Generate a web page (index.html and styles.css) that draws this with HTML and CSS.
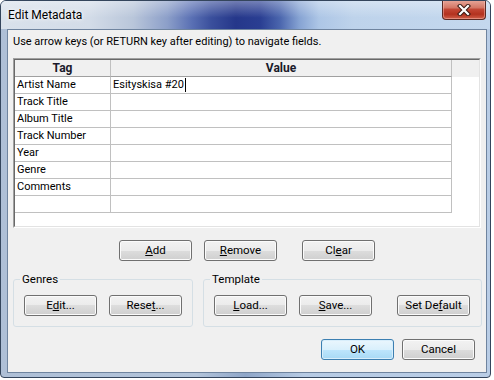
FILE: index.html
```html
<!DOCTYPE html>
<html>
<head>
<meta charset="utf-8">
<title>Edit Metadata</title>
<link rel="stylesheet" href="styles.css">
</head>
<body>
<div class="window">
  <div class="titlebar">
    <span class="title">Edit Metadata</span>
    <div class="close">
      <svg width="14" height="12" viewBox="0 0 14 12">
        <path d="M3 2 L11 10 M11 2 L3 10" stroke="#3a1a14" stroke-width="4.2" stroke-linecap="square" fill="none"/>
        <path d="M3 2 L11 10 M11 2 L3 10" stroke="#ffffff" stroke-width="2.2" stroke-linecap="square" fill="none"/>
      </svg>
    </div>
  </div>
  <div class="client">
    <p class="hint">Use arrow keys (or RETURN key after editing) to navigate fields.</p>
    <div class="listbox">
      <div class="listinner">
        <div class="hdr">
          <div class="hcell c-tag">Tag</div>
          <div class="hcell c-val">Value</div>
        </div>
        <div class="row"><div class="cell c-tag">Artist Name</div><div class="cell c-val">Esityskisa #20<span class="caret"></span></div></div>
        <div class="row"><div class="cell c-tag">Track Title</div><div class="cell c-val"></div></div>
        <div class="row"><div class="cell c-tag">Album Title</div><div class="cell c-val"></div></div>
        <div class="row"><div class="cell c-tag">Track Number</div><div class="cell c-val"></div></div>
        <div class="row"><div class="cell c-tag">Year</div><div class="cell c-val"></div></div>
        <div class="row"><div class="cell c-tag">Genre</div><div class="cell c-val"></div></div>
        <div class="row"><div class="cell c-tag">Comments</div><div class="cell c-val"></div></div>
        <div class="row"><div class="cell c-tag"></div><div class="cell c-val"></div></div>
      </div>
    </div>
    <div class="btnrow">
      <button class="btn"><u>A</u>dd</button>
      <button class="btn gap12"><u>R</u>emove</button>
      <button class="btn gap25">Cl<u>e</u>ar</button>
    </div>
    <div class="groups">
      <fieldset class="group genres">
        <legend>Genres</legend>
        <div class="gbody">
          <button class="btn">E<u>d</u>it...</button>
          <button class="btn gap12">Rese<u>t</u>...</button>
        </div>
      </fieldset>
      <fieldset class="group template">
        <legend>Template</legend>
        <div class="gbody">
          <button class="btn"><u>L</u>oad...</button>
          <button class="btn gap12"><u>S</u>ave...</button>
          <button class="btn gap25">Set De<u>f</u>ault</button>
        </div>
      </fieldset>
    </div>
    <div class="okrow">
      <button class="btn ok">OK</button>
      <button class="btn gap8">Cancel</button>
    </div>
  </div>
</div>
</body>
</html>
```
FILE: styles.css
```css
html, body {
  margin: 0;
  padding: 0;
  background: #ffffff;
}

body {
  font-family: Roboto, "Open Sans", sans-serif;
  font-size: 11px;
  color: #000;
}

.window {
  width: 491px;
  height: 378px;
  box-sizing: border-box;
  border: 1px solid #34455c;
  border-radius: 6px 6px 4px 4px;
  background: linear-gradient(to right, #aebfd6 0%, #b3c4da 40%, #8fa6c8 50%, #b7cbe4 62%, #b9cde6 100%);
  display: flex;
  flex-direction: column;
  overflow: hidden;
}

.titlebar {
  height: 28px;
  flex: none;
  display: flex;
  align-items: center;
  background:
    linear-gradient(to bottom, rgba(255,255,255,0.35), rgba(255,255,255,0) 60%),
    linear-gradient(to right, #d9e1eb 0%, #d3dce8 18%, #b9c6da 27%, #8c9fc9 34%, #5a70b4 39%, #3a4f9c 43%, #25378a 48%, #2a3e92 53%, #4a65ad 57%, #86a3d3 61%, #adc6e6 65%, #bed3eb 72%, #c4d8ee 100%);
}

.title {
  padding-left: 7px;
  font-size: 12px;
  color: #000;
  text-shadow: 0 0 6px #ffffff, 0 0 3px #ffffff;
}

.close {
  margin-left: auto;
  margin-right: 4px;
  align-self: flex-start;
  margin-top: -1px;
  width: 44px;
  height: 20px;
  box-sizing: border-box;
  border: 1px solid #5a2a24;
  border-top: none;
  border-radius: 0 0 4px 4px;
  background: linear-gradient(to bottom, #e8a99c 0%, #d47766 40%, #c24634 50%, #b3321f 75%, #d0604a 100%);
  box-shadow: inset 0 0 0 1px rgba(255,200,190,0.45);
  display: flex;
  align-items: center;
  justify-content: center;
}

.client {
  flex: 1;
  margin: 0 3px 4px 6px;
  border: 1px solid #6f849f;
  background: #f0f0f0;
  display: flex;
  flex-direction: column;
}

.hint {
  margin: 4px 0 0 5px;
  line-height: 16px;
}

.listbox {
  margin: 8px 0 0 5px;
  width: 468px;
  height: 170px;
  box-sizing: border-box;
  border: 1px solid;
  border-color: #a0a0a0 #ffffff #ffffff #a0a0a0;
}

.listinner {
  height: 100%;
  box-sizing: border-box;
  border: 1px solid;
  border-color: #696969 #e3e3e3 #e3e3e3 #696969;
  background: #ffffff;
}

.hdr {
  display: flex;
  height: 17px;
  background: #f0f0f0;
}

.hcell {
  box-sizing: border-box;
  height: 17px;
  border-right: 1px solid #c0c0c0;
  border-bottom: 1px solid #a0a0a0;
  font-weight: bold;
  font-size: 12px;
  text-align: center;
  line-height: 16px;
  color: #1a1a2a;
}

.c-tag { width: 96px; }
.c-val { width: 341px; }

.row {
  display: flex;
  height: 17px;
}

.cell {
  box-sizing: border-box;
  height: 17px;
  border-right: 1px solid #c0c0c0;
  border-bottom: 1px solid #c0c0c0;
  padding-left: 2px;
  line-height: 16px;
  white-space: nowrap;
  display: flex;
  align-items: center;
}

.caret {
  display: inline-block;
  width: 0;
  height: 14px;
  border-left: 1px solid #000;
  margin-left: 1px;
}

.btn {
  width: 73px;
  height: 21px;
  box-sizing: border-box;
  padding: 0;
  border: 1px solid #707070;
  border-radius: 3px;
  background: linear-gradient(to bottom, #f2f2f2 0%, #ebebeb 50%, #dddddd 50%, #cfcfcf 100%);
  box-shadow: inset 0 0 0 1px #fbfbfb;
  font-family: Roboto, "Open Sans", sans-serif;
  font-size: 11.5px;
  color: #000;
  line-height: 17px;
  text-align: center;
}

.btn.ok {
  border-color: #3c7fb1;
  background: linear-gradient(to bottom, #eaf6fd 0%, #d9f0fc 50%, #bee6fd 50%, #a7d9f5 100%);
  box-shadow: inset 0 0 0 1px #d8eefb;
}

.gap8 { margin-left: 8px; }
.gap12 { margin-left: 12px; }
.gap25 { margin-left: 25px; }

.btnrow {
  display: flex;
  margin-top: 12px;
  padding-left: 111px;
}

.groups {
  display: flex;
  margin-top: 10px;
  padding-left: 5px;
}

.group {
  margin: 0;
  padding: 0;
  box-sizing: border-box;
  border: 1px solid #d5dfe5;
  border-radius: 3px;
  min-width: 0;
}

.group legend {
  margin-left: 6px;
  padding: 0 2px;
  line-height: 16px;
  font-size: 11.5px;
}

.genres { width: 180px; }
.template { width: 279px; margin-left: 10px; }

.gbody {
  display: flex;
  padding: 8px 10px 10px 10px;
}

.okrow {
  display: flex;
  justify-content: flex-end;
  margin-top: 12px;
  padding-right: 11px;
}
```
